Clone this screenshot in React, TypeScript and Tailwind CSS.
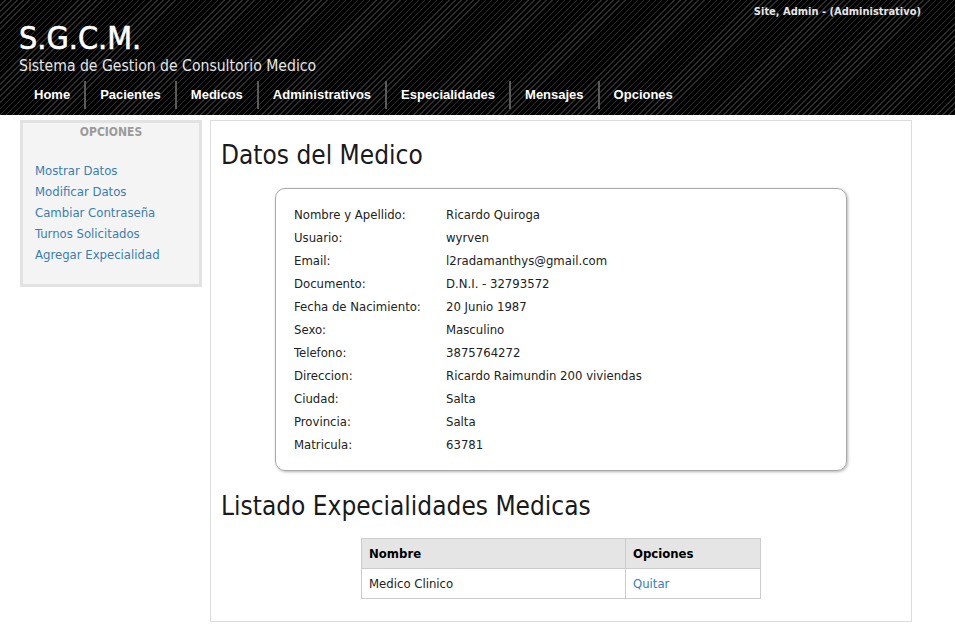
import React from "react";

const rows: [string, string][] = [
  ["Nombre y Apellido:", "Ricardo Quiroga"],
  ["Usuario:", "wyrven"],
  ["Email:", "l2radamanthys@gmail.com"],
  ["Documento:", "D.N.I. - 32793572"],
  ["Fecha de Nacimiento:", "20 Junio 1987"],
  ["Sexo:", "Masculino"],
  ["Telefono:", "3875764272"],
  ["Direccion:", "Ricardo Raimundin 200 viviendas"],
  ["Ciudad:", "Salta"],
  ["Provincia:", "Salta"],
  ["Matricula:", "63781"],
];

const nav = ["Home", "Pacientes", "Medicos", "Administrativos", "Especialidades", "Mensajes", "Opciones"];
const side = ["Mostrar Datos", "Modificar Datos", "Cambiar Contraseña", "Turnos Solicitados", "Agregar Expecialidad"];

export default function App() {
  return (
    <div className="min-h-[624px] bg-white text-[#222] font-['DejaVu_Sans_Condensed','DejaVu_Sans',sans-serif] text-[13px]">
      <header className="h-[115px] bg-[repeating-linear-gradient(135deg,#000_0px,#000_3.3px,#2c2c2c_3.3px,#2c2c2c_4.3px)] relative">
        <div className="absolute right-[34px] top-[4px] text-[11px] font-bold text-[#e6e6e6] font-['DejaVu_Sans_Condensed',sans-serif]">
          Site, Admin - (Administrativo)
        </div>
        <div className="pl-[19px] pt-[19px]">
          <div className="text-[32px] leading-[38px] text-white font-['DejaVu_Sans_Condensed',sans-serif] [-webkit-text-stroke:0.6px_white]">S.G.C.M.</div>
          <div className="text-[15.6px] leading-[18px] text-[#e8e8e8] font-['DejaVu_Sans_Condensed',sans-serif]">Sistema de Gestion de Consultorio Medico</div>
        </div>
        <nav className="flex pl-[20px] mt-[5px] h-[29px] items-center font-['Liberation_Sans',sans-serif] font-bold text-[13px] text-white">
          {nav.map((n, i) => (
            <React.Fragment key={n}>
              {i > 0 && <div className="w-[2px] h-[28px] bg-[#5a5a5a]" />}
              <div className="px-[14px]">{n}</div>
            </React.Fragment>
          ))}
        </nav>
      </header>
      <div className="flex items-start pl-[20px] pt-[5px] gap-[8px]">
        <aside className="w-[182px] h-[167px] border-[3px] border-[#e2e2e2] bg-[#f4f4f4]">
          <div className="text-center font-bold text-[12px] text-[#9a9a9a] leading-[14px] pt-[2px]">OPCIONES</div>
          <ul className="mt-[21px] pl-[12px] flex flex-col">
            {side.map((s) => (
              <li key={s} className="leading-[21px] text-[#3b7db3]">{s}</li>
            ))}
          </ul>
        </aside>
        <main className="w-[702px] h-[502px] border border-[#dcdcdc] px-[10px]">
          <h1 className="text-[26px] leading-[30px] text-[#1a1a1a] mt-[19px]">Datos del Medico</h1>
          <div className="mx-auto mt-[18px] w-[572px] rounded-[10px] border border-[#a9a9a9] shadow-[1px_1px_3px_rgba(0,0,0,0.3)] pl-[18px] py-[14px]">
            {rows.map(([k, v]) => (
              <div key={k} className="flex leading-[23px] text-[#222]">
                <div className="w-[152px]">{k}</div>
                <div>{v}</div>
              </div>
            ))}
          </div>
          <h2 className="text-[26px] leading-[30px] text-[#1a1a1a] mt-[20px]">Listado Expecialidades Medicas</h2>
          <table className="mx-auto mt-[17px] w-[400px] border-collapse">
            <thead>
              <tr className="bg-[#e5e5e5]">
                <th className="border border-[#cccccc] text-left font-bold text-black h-[30px] px-[7px] w-[264px]">Nombre</th>
                <th className="border border-[#cccccc] text-left font-bold text-black h-[30px] px-[7px]">Opciones</th>
              </tr>
            </thead>
            <tbody>
              <tr>
                <td className="border border-[#cccccc] h-[30px] px-[7px] text-[#222]">Medico Clinico</td>
                <td className="border border-[#cccccc] h-[30px] px-[7px] text-[#3b7db3]">Quitar</td>
              </tr>
            </tbody>
          </table>
        </main>
      </div>
    </div>
  );
}
